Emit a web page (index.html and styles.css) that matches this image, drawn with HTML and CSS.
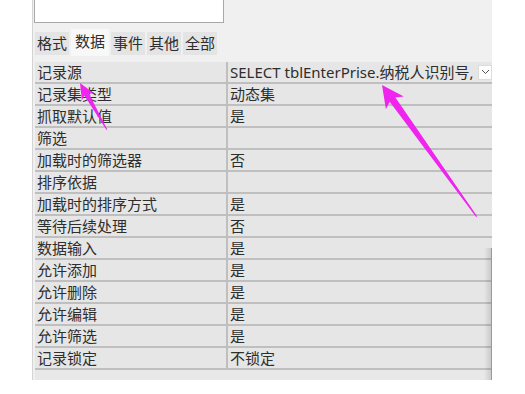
FILE: index.html
```html
<!DOCTYPE html>
<html lang="zh-CN">
<head>
    <meta charset="UTF-8" />
    <title>属性表</title>
    <link rel="stylesheet" href="styles.css">
</head>
<body>
    <div class="sheet">
        <div class="object-box"></div>

        <div class="tabs">
            <span class="tab">格式</span>
            <span class="tab active">数据</span>
            <span class="tab">事件</span>
            <span class="tab">其他</span>
            <span class="tab">全部</span>
        </div>

        <div class="props">
            <div class="cell">记录源</div>
            <div class="cell value source">
                <span class="source-text">SELECT tblEnterPrise.纳税人识别号,</span>
                <span class="drop">
                    <svg width="9" height="6" viewBox="0 0 9 6"><path d="M1 1 L4.5 4.5 L8 1" fill="none" stroke="#555" stroke-width="1"/></svg>
                </span>
            </div>
            <div class="cell">记录集类型</div>
            <div class="cell value">动态集</div>
            <div class="cell">抓取默认值</div>
            <div class="cell value">是</div>
            <div class="cell">筛选</div>
            <div class="cell value"></div>
            <div class="cell">加载时的筛选器</div>
            <div class="cell value">否</div>
            <div class="cell">排序依据</div>
            <div class="cell value"></div>
            <div class="cell">加载时的排序方式</div>
            <div class="cell value">是</div>
            <div class="cell">等待后续处理</div>
            <div class="cell value">否</div>
            <div class="cell">数据输入</div>
            <div class="cell value">是</div>
            <div class="cell">允许添加</div>
            <div class="cell value">是</div>
            <div class="cell">允许删除</div>
            <div class="cell value">是</div>
            <div class="cell">允许编辑</div>
            <div class="cell value">是</div>
            <div class="cell">允许筛选</div>
            <div class="cell value">是</div>
            <div class="cell">记录锁定</div>
            <div class="cell value">不锁定</div>
            <div class="cell blank"></div>
        </div>
    </div>

    <!-- highlight arrows drawn over the screenshot -->
    <svg class="marks" width="525" height="394" viewBox="0 0 525 394">
        <polygon fill="#f024ef" points="80,83 94,93.4 88.6,93 107.3,129.5 106.5,130 84.3,95.5 81.9,100.4"/>
        <polygon fill="#f024ef" points="382,85 403.8,96.4 395.4,97.6 477.1,216.2 476.1,216.9 389.7,101.7 385.9,109.3"/>
    </svg>
</body>
</html>
```

FILE: styles.css
```css
* {
    box-sizing: border-box;
    margin: 0;
    padding: 0;
}

body {
    background: #fff;
    font-family: 'Noto Sans', 'Noto Sans CJK SC', sans-serif;
    font-size: 15px;
    color: #2e2e2e;
    position: relative;
    width: 525px;
    height: 394px;
    overflow: hidden;
}

.sheet {
    position: relative;
    margin-left: 32px;
    width: 460px;
    height: 380px;
    background: #f0f0f0;
    border-left: 1px solid #d4d4d4;
    overflow: hidden;
}

/* shadow of the scroll edge on the right */
.sheet::after {
    content: '';
    position: absolute;
    right: 0;
    top: 248px;
    bottom: 0;
    width: 7px;
    background: linear-gradient(to right, rgba(0, 0, 0, 0), rgba(0, 0, 0, 0.12));
    border-right: 1px solid #9a9a9a;
}

.object-box {
    margin-left: 1px;
    width: 190px;
    height: 23px;
    background: #fff;
    border: 1px solid #a8a8a8;
    border-top: none;
}

.tabs {
    display: flex;
    align-items: flex-end;
    gap: 2px;
    margin-top: 6px;
    padding-left: 2px;
    height: 27px;
}

.tab {
    background: #e4e4e4;
    height: 23px;
    line-height: 22px;
    padding: 0 2px;
    margin-bottom: 1px;
}

.tab.active {
    background: #f8f8f8;
    height: 27px;
    line-height: 25px;
    padding: 0 4px;
    margin-bottom: 0;
}

.props {
    display: grid;
    grid-template-columns: 191px 1fr;
    grid-auto-rows: 20px;
    gap: 2px;
    margin-top: 6px;
    margin-left: 2px;
    background: #bfbfbf;
}

.cell {
    background: #e6e6e6;
    line-height: 20px;
    padding-left: 2px;
    white-space: nowrap;
    overflow: hidden;
}

.source {
    display: flex;
    align-items: center;
}

.source-text {
    flex: 1;
    overflow: hidden;
}

.drop {
    width: 14px;
    height: 15px;
    background: #fff;
    border: 1px solid #dcdcdc;
    display: flex;
    align-items: center;
    justify-content: center;
}

.blank {
    grid-column: 1 / 3;
    background: #e8e8e8;
    padding: 0;
}

.marks {
    position: absolute;
    top: 0;
    left: 0;
    pointer-events: none;
}
```
